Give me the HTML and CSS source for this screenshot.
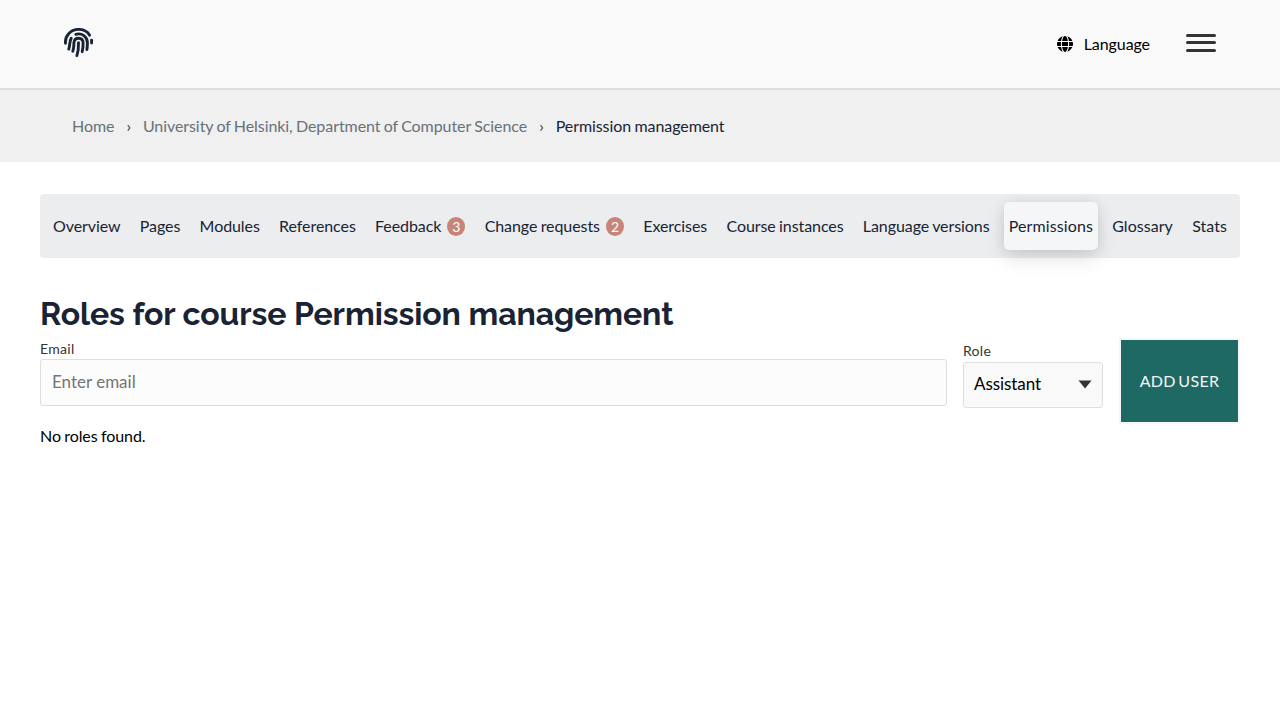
FILE: index.html
```
<!DOCTYPE html>
<html lang="en">
<head>
<meta charset="utf-8">
<title>Permission management</title>
<link rel="stylesheet" href="styles.css">
</head>
<body>
<header class="header">
  <a class="logo" href="#" aria-label="Home">
    <svg width="30" height="30" viewBox="0 0 30 30" fill="none" stroke="#1a2333" stroke-width="2.900" stroke-linecap="round">
      <path d="M1.5 15.2C.8 7.500 7 1.400 14.300 1.400C19.300 1.400 23.500 3.600 25.600 7.200"/>
      <path d="M27.600 12.200L27.600 15"/>
      <path d="M7.200 10.300C5.400 13.500 6 17 4.800 21.200"/>
      <path d="M11.800 6.300C17.900 4.500 23.400 8.800 23.400 14.600C23.400 17.400 23.300 19.500 22.900 21.600"/>
      <path d="M8.800 23.200C10.100 19.500 9.800 16.600 10 14.200C10.700 8.800 18.700 8.800 19.100 14.600C19.200 18 18.900 20.800 18.200 23.700"/>
      <path d="M14.500 14.700C14.600 19.600 14.200 23.800 12.900 27.600"/>
    </svg>
  </a>
  <div class="header-actions">
    <button class="language">
      <svg class="globe" width="16" height="16" viewBox="0 8 496 496" preserveAspectRatio="none"><path d="M336.500 160C322 70.700 287.800 8 248 8s-74 62.700-88.500 152h177zM152 256c0 22.200 1.200 43.500 3.300 64h185.300c2.100-20.500 3.300-41.800 3.300-64s-1.200-43.500-3.300-64H155.300c-2.100 20.500-3.300 41.800-3.300 64zm324.700-96c-28.600-67.900-86.500-120.400-158-141.600 24.400 33.800 41.200 84.700 50 141.600h108zM177.200 18.400C105.800 39.600 47.800 92.100 19.300 160h108c8.700-56.900 25.500-107.800 49.900-141.600zM487.400 192H372.700c2.100 21 3.300 42.500 3.300 64s-1.200 43-3.300 64h114.600c5.500-20.500 8.600-41.800 8.600-64s-3.100-43.500-8.500-64zM120 256c0-21.500 1.200-43 3.300-64H8.600C3.200 212.500 0 233.800 0 256s3.200 43.500 8.600 64h114.600c-2-21-3.200-42.500-3.200-64zm39.500 96c14.500 89.300 48.700 152 88.500 152s74-62.700 88.500-152h-177zm159.300 141.600c71.400-21.200 129.400-73.700 158-141.600h-108c-8.800 56.900-25.600 107.800-50 141.600zM19.300 352c28.600 67.900 86.500 120.400 158 141.600-24.400-33.800-41.200-84.700-50-141.600h-108z"/></svg>
      <span>Language</span>
    </button>
    <button class="menu" aria-label="Menu"><span class="bar"></span><span class="bar"></span><span class="bar bar-last"></span></button>
  </div>
</header>
<nav class="breadcrumbs">
  <a class="crumb" href="#">Home</a>
  <span class="separator">›</span>
  <a class="crumb" href="#">University of Helsinki, Department of Computer Science</a>
  <span class="separator">›</span>
  <span class="crumb crumb-current">Permission management</span>
</nav>
<main class="content">
  <nav class="tabs">
    <a class="tab" href="#">Overview</a>
    <a class="tab" href="#">Pages</a>
    <a class="tab" href="#">Modules</a>
    <a class="tab" href="#">References</a>
    <a class="tab" href="#">Feedback<span class="badge">3</span></a>
    <a class="tab" href="#">Change requests<span class="badge">2</span></a>
    <a class="tab" href="#">Exercises</a>
    <a class="tab" href="#">Course instances</a>
    <a class="tab" href="#">Language versions</a>
    <a class="tab tab-active" href="#">Permissions</a>
    <a class="tab" href="#">Glossary</a>
    <a class="tab" href="#">Stats</a>
  </nav>
  <h1 class="title">Roles for course Permission management</h1>
  <form class="form">
    <div class="field email">
      <label class="label" for="email">Email</label>
      <input class="input" id="email" type="text" placeholder="Enter email">
    </div>
    <div class="field role">
      <label class="label" for="role">Role</label>
      <div class="select-wrap">
        <select class="select" id="role"><option>Assistant</option></select>
        <svg class="arrow" width="14" height="9" viewBox="0 0 14 9"><path d="M0.500 0.500H13.500L7 8.500Z" fill="#333"/></svg>
      </div>
    </div>
    <button class="add" type="button">Add user</button>
  </form>
  <p class="empty">No roles found.</p>
</main>
</body>
</html>
```

FILE: styles.css
```
* { box-sizing: border-box; }
body {
  margin: 0;
  background: #fff;
  color: #000;
  font: 16px/24px Lato, sans-serif;
  letter-spacing: -.07px;
  word-spacing: -.7px;
}
a { text-decoration: none; }
button { border: 0; background: none; font: inherit; color: inherit; }
.header {
  height: 90px;
  padding: 0 64px;
  display: flex;
  justify-content: space-between;
  align-items: flex-start;
  background: #f9f9f9;
  border-bottom: 2px solid #dedede;
}
.logo { display: flex; padding-top: 28px; }
.header-actions { display: flex; gap: 36px; }
.language {
  display: flex;
  align-items: center;
  gap: 11px;
  height: 88px;
  padding: 0;
  letter-spacing: -.08px;
}
.menu {
  display: flex;
  flex-direction: column;
  gap: 4px;
  width: 30px;
  padding: 34px 0 0;
}
.bar { height: 3px; border-radius: 2px; background: #333; }
.bar-last { margin-top: 1px; }
.breadcrumbs {
  height: 72px;
  padding: 0 72px;
  display: flex;
  align-items: center;
  background: #f0f0f0;
}
.crumb { color: #687078; }
.crumb-current { color: #1a2333; }
.separator { width: 28.5px; text-align: center; color: #333; }
.content { padding: 32px 40px; }
.tabs {
  height: 64px;
  padding: 8px;
  display: flex;
  justify-content: space-between;
  border-radius: 4px;
  background: #ebedee;
}
.tab {
  display: flex;
  align-items: center;
  padding: 0 5px;
  border-radius: 5px;
  color: #1a2333;
  white-space: nowrap;
}
.tab-active {
  background: #f5f6f7;
  box-shadow: 0 8px 20px rgba(0, 0, 0, .12), 0 0 12px rgba(0, 0, 0, .07);
  letter-spacing: .1px;
}
.tab-active ~ .tab { letter-spacing: .04px; }
.badge {
  width: 18px;
  height: 19px;
  margin-left: 6px;
  border-radius: 50%;
  background: #c78478;
  color: #fff;
  font-size: 14px;
  line-height: 20px;
  text-align: center;
}
.title {
  margin: 36px 0 0;
  color: #1a2333;
  font: 700 32px/40px Raleway, Lato, sans-serif;
  letter-spacing: -.08px;
  word-spacing: 0;
  white-space: nowrap;
}
.form { display: flex; margin-top: 6px; }
.field { display: flex; flex-direction: column; }
.email { width: 907px; }
.role { width: 140px; margin: 2px 18px 0 16px; }
.label { color: #333; font-size: 14px; line-height: 18px; letter-spacing: .3px; }
.input, .select {
  width: 100%;
  border: 1px solid #dedede;
  border-radius: 3px;
  font: 17px/22px Lato, sans-serif;
  color: #000;
}
.input { height: 47px; margin-top: 1px; padding: 0 11px 2px; background: #fcfcfc; }
.input::placeholder { color: #757575; opacity: 1; }
.select-wrap { position: relative; margin-top: 2px; }
.select {
  display: block;
  height: 46px;
  padding: 0 10px 2px;
  appearance: none;
  background: #f9f9f9;
  letter-spacing: -.08px;
}
.arrow { position: absolute; right: 11px; top: 18px; }
.add {
  width: 117px;
  height: 82px;
  padding: 0;
  background: #1f6964;
  box-shadow: 0 0 0 2px #f5f6f7;
  color: #f5f6f7;
  letter-spacing: .3px;
  word-spacing: -1.8px;
  text-transform: uppercase;
}
.empty { margin: 2px 0 0; }
```
